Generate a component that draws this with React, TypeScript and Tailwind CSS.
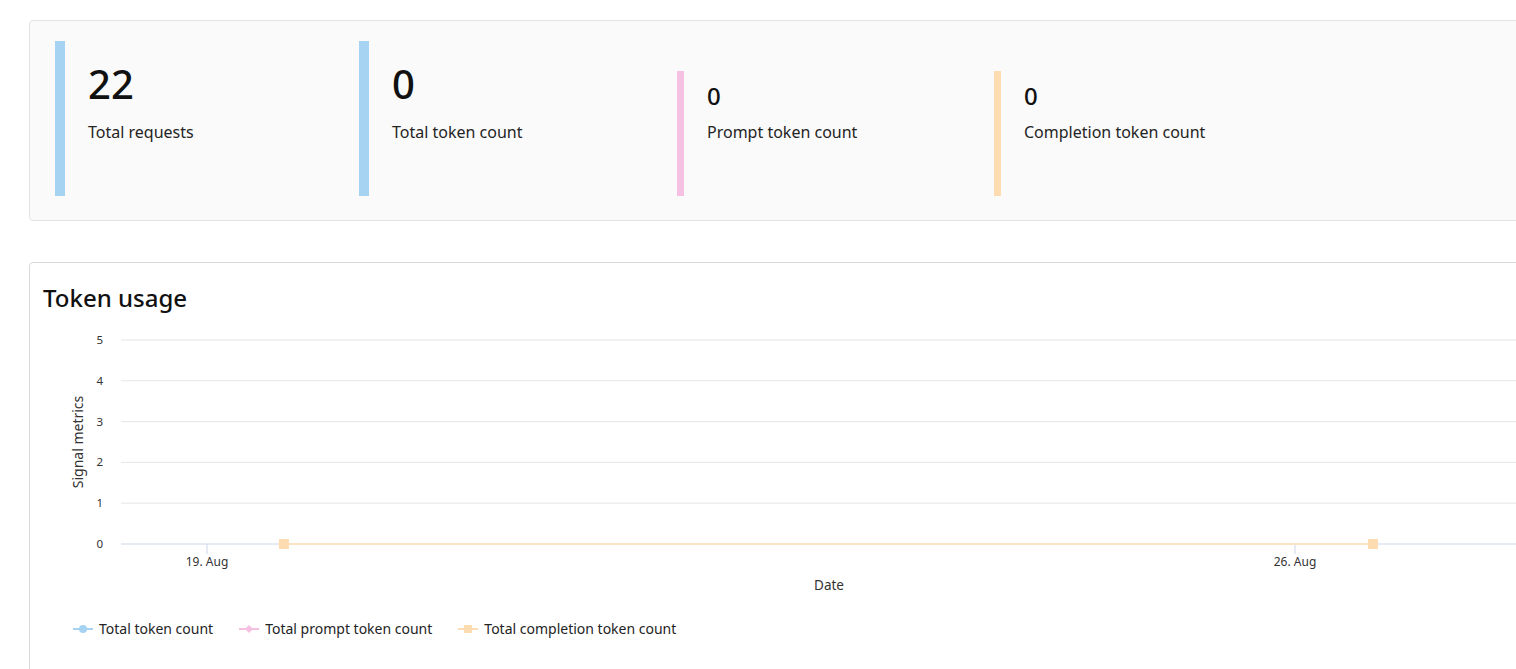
import React from "react";

// ── Data ──────────────────────────────────────────────────────────────────────

const stats = [
  { value: "22", label: "Total requests", bar: "bg-[#a7d3f3] w-[10px]", width: "w-[304px]", big: true },
  { value: "0", label: "Total token count", bar: "bg-[#a7d3f3] w-[10px]", width: "w-[318px]", big: true },
  { value: "0", label: "Prompt token count", bar: "bg-[#f5c0e1] w-[7px]", width: "w-[317px]", big: false },
  { value: "0", label: "Completion token count", bar: "bg-[#fddcb2] w-[7px]", width: "w-[317px]", big: false },
];

const font = "font-['Noto_Sans','Open_Sans',sans-serif]";

// ── Sub-components ────────────────────────────────────────────────────────────

function StatItem({ s }: { s: (typeof stats)[number] }) {
  return (
    <div className={`flex shrink-0 ${s.width} ${s.big ? "h-[155px]" : "h-[125px] mt-[30px]"}`}>
      <div className={`${s.bar} shrink-0 self-stretch`} />
      <div className={`pl-[23px] ${s.big ? "pt-[19px]" : "pt-[10px]"}`}>
        <div
          className={
            s.big
              ? "text-[40px] leading-[48px] font-medium text-[#111]"
              : "text-[24px] leading-[30px] font-medium text-[#111]"
          }
        >
          {s.value}
        </div>
        <div className={`text-[16px] leading-[22px] text-[#242424] ${s.big ? "mt-[13px]" : "mt-[10px]"}`}>
          {s.label}
        </div>
      </div>
    </div>
  );
}

function Chart() {
  const gridY = [0, 1, 2, 3, 4, 5].map((i) => ({ v: i, y: 219 - i * 40.8 }));
  return (
    <svg width="1490" height="280" className="block" style={{ fontFamily: "'Noto Sans', 'Open Sans', sans-serif" }}>
      {/* grid */}
      {gridY.slice(1).map((g) => (
        <line key={g.v} x1="91" x2="1507" y1={g.y} y2={g.y} stroke="#e6e6e6" strokeWidth="1" />
      ))}
      {/* x axis */}
      <line x1="91" x2="1507" y1="219" y2="219" stroke="#ccd6eb" strokeWidth="1" />
      <line x1="177" x2="177" y1="219" y2="229" stroke="#ccd6eb" strokeWidth="1" />
      <line x1="1265" x2="1265" y1="219" y2="229" stroke="#ccd6eb" strokeWidth="1" />

      {/* y labels */}
      {gridY.map((g) => (
        <text key={g.v} x="73" y={g.y + 4} textAnchor="end" fontSize="11.5" fill="#333">
          {g.v}
        </text>
      ))}

      {/* x labels */}
      <text x="177" y="241" textAnchor="middle" fontSize="12" fill="#333">19. Aug</text>
      <text x="1265" y="241" textAnchor="middle" fontSize="12" fill="#333">26. Aug</text>
      <text x="799" y="265" textAnchor="middle" fontSize="13.5" fill="#333">Date</text>
      <text
        x="0"
        y="0"
        textAnchor="middle"
        fontSize="14"
        fill="#333"
        transform="translate(53 117) rotate(-90)"
      >
        Signal metrics
      </text>

      {/* series: all zero, completion drawn on top */}
      <line x1="254" x2="1343" y1="219" y2="219" stroke="#a7d3f3" strokeWidth="2" />
      <line x1="254" x2="1343" y1="219" y2="219" stroke="#f5c0e1" strokeWidth="2" />
      <line x1="254" x2="1343" y1="219" y2="219" stroke="#fde3c4" strokeWidth="2" />
      <rect x="249" y="214" width="10" height="10" fill="#fddcb2" />
      <rect x="1338" y="214" width="10" height="10" fill="#fddcb2" />
    </svg>
  );
}

function LegendItem({ kind, label }: { kind: "circle" | "diamond" | "square"; label: string }) {
  const color = kind === "circle" ? "#a7d3f3" : kind === "diamond" ? "#f5c0e1" : "#fddcb2";
  return (
    <div className="flex items-center gap-[6px]">
      <svg width="20" height="12">
        <line x1="0" x2="20" y1="6" y2="6" stroke={color} strokeWidth="2" />
        {kind === "circle" && <circle cx="10" cy="6" r="4" fill={color} />}
        {kind === "diamond" && <path d="M10 2 L14 6 L10 10 L6 6 Z" fill={color} />}
        {kind === "square" && <rect x="6" y="2" width="8" height="8" fill={color} />}
      </svg>
      <span className="text-[14px] text-[#242424]">{label}</span>
    </div>
  );
}

// ── Main Component ────────────────────────────────────────────────────────────

export default function App() {
  return (
    <div className={`w-[1516px] h-[669px] overflow-hidden bg-white ${font}`}>
      <div className="pl-[29px] pt-5 w-[1560px]">
        {/* stats panel */}
        <div className="border border-[#e3e3e3] rounded bg-[#fafafa] pl-[25px] pt-5 pb-6 flex items-start">
          {stats.map((s) => (
            <StatItem key={s.label} s={s} />
          ))}
        </div>

        {/* token usage chart */}
        <div className="mt-[41px] border border-[#d9d9d9] rounded bg-white h-[440px]">
          <h2 className="pl-[13px] pt-[20px] text-[24px] leading-[30px] font-medium text-[#111]">Token usage</h2>
          <div className="mt-[12px]">
            <Chart />
          </div>
          <div className="flex items-center gap-[26px] pl-[43px] mt-[13px]">
            <LegendItem kind="circle" label="Total token count" />
            <LegendItem kind="diamond" label="Total prompt token count" />
            <LegendItem kind="square" label="Total completion token count" />
          </div>
        </div>
      </div>
    </div>
  );
}
